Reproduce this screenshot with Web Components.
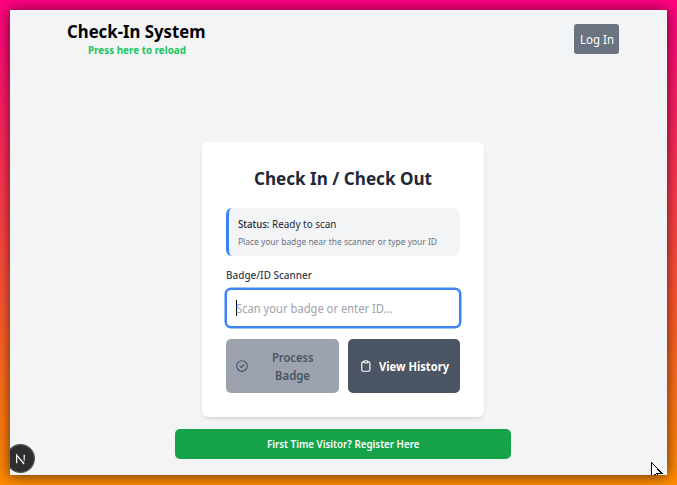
<!DOCTYPE html>
<html lang="en">
<head>
<meta charset="utf-8">
<title>Check-In System</title>
<style>
html,body{margin:0;height:100%;overflow:hidden}
body{font-family:"Noto Sans","Open Sans",sans-serif;color:#1f2937}
</style>
</head>
<body>
<checkin-app></checkin-app>
<script>
const define = (name, html, after) => {
  const t = document.createElement('template');
  t.innerHTML = html;
  customElements.define(name, class extends HTMLElement {
    connectedCallback() {
      if (this.shadowRoot) return;
      this.attachShadow({mode: 'open'}).append(t.content.cloneNode(true));
      if (after) after(this);
    }
  });
};

/* One line of text condensed to a given width: w = width, s = size, l = line height */
define('fit-text', `<style>
:host{display:block;white-space:nowrap;flex:none}
span{display:inline-block;transform-origin:0 0;vertical-align:top}
</style><span><slot></slot></span>`, el => {
  const w = +el.getAttribute('w');
  el.style.fontSize = el.getAttribute('s') + 'px';
  el.style.lineHeight = el.getAttribute('l') + 'px';
  el.style.height = el.getAttribute('l') + 'px';
  el.style.width = w + 'px';
  const span = el.shadowRoot.querySelector('span');
  span.style.transform = `scaleX(${w / span.getBoundingClientRect().width})`;
});

define('app-header', `<style>
:host{display:flex;justify-content:space-between;align-items:flex-start;padding:14px 48px 0 57px}
.brand{display:flex;flex-direction:column;align-items:center;margin-top:-1px}
.title{font-weight:700;color:#000}
.reload{font-weight:700;color:#22c55e;margin:1px 0 0 1px}
button{all:unset;box-sizing:border-box;width:45px;height:30px;border-radius:3px;background:#6b7280;color:#fff;display:flex;align-items:center;justify-content:center;padding-top:1px}
</style>
<div class="brand"><fit-text class="title" w="138.5" s="18" l="16">Check-In System</fit-text>
<fit-text class="reload" w="98" s="10.5" l="20">Press here to reload</fit-text></div>
<button><fit-text w="34" s="12" l="20">Log In</fit-text></button>`);

define('status-box', `<style>
:host{display:block;box-sizing:border-box;height:48px;border-left:3px solid #3b82f6;border-radius:6px;background:#f3f4f6;padding:8px 9px}
div{display:flex;gap:2.5px;color:#1f2937}
.hint{color:#6b7280}
</style>
<div><fit-text style="font-weight:500" w="31.5" s="10.5" l="16">Status:</fit-text><fit-text w="64.5" s="10.5" l="16">Ready to scan</fit-text></div>
<fit-text class="hint" w="199" s="9" l="19">Place your badge near the scanner or type your ID</fit-text>`);

define('scan-field', `<style>
:host{display:block;padding-top:11px}
.label{color:#374151;font-weight:500}
.box{box-sizing:border-box;height:38px;margin-top:6px;border-radius:5px;background:#fff;border:1px solid #3b82f6;box-shadow:0 0 0 1.5px #3b82f6;display:flex;align-items:center;padding-left:9px;color:#9ca3af}
.caret{width:1px;height:16px;background:#000;margin-right:-1px}
.hint{padding-top:2px}
</style>
<fit-text class="label" w="86" s="10.5" l="16">Badge/ID Scanner</fit-text>
<div class="box"><i class="caret"></i><fit-text class="hint" w="156.5" s="12" l="18">Scan your badge or enter ID...</fit-text></div>`);

define('action-button', `<style>
:host{display:flex;box-sizing:border-box;align-items:center;height:54px;border-radius:5px;background:#4b5563;color:#fff;font-weight:600;padding:0 10px}
:host([disabled]){background:#9ca3af;color:#4b5563}
.text{flex:1;display:flex;flex-direction:column;align-items:center;padding-top:2px}
::slotted(svg){flex:none;display:block}
</style><slot name="icon"></slot><div class="text"><slot></slot></div>`);

define('checkin-card', `<style>
:host{display:block;box-sizing:border-box;width:282px;height:275px;margin:0 0 0 192px;padding:24px;background:#fff;border-radius:6px;box-shadow:0 3px 5px -1px #0000001a,0 2px 3px -2px #0000001a}
.head{display:flex;justify-content:center;height:42px;font-weight:700}
.actions{display:grid;grid-template-columns:113px 112px;gap:9px;margin-top:12px}
</style>
<div class="head"><fit-text w="178" s="18" l="24">Check In / Check Out</fit-text></div>
<status-box></status-box>
<scan-field></scan-field>
<div class="actions">
<action-button disabled><svg slot="icon" width="12" height="12" viewBox="0 0 12 12" fill="none" stroke="#4b5563" stroke-width="1.15"><circle cx="6" cy="6" r="5.3"/><path d="M4 6.1l1.4 1.4L8.1 4.7" stroke-linecap="round" stroke-linejoin="round"/></svg>
<fit-text w="41.5" s="12" l="18" style="margin-left:8px">Process</fit-text><fit-text w="35" s="12" l="18" style="margin-left:8px">Badge</fit-text></action-button>
<action-button><svg slot="icon" style="margin-left:2px" width="12" height="12" viewBox="0 0 12 12" fill="none" stroke="#fff" stroke-width="1.15" stroke-linejoin="round"><path d="M4 1.8H3a1.2 1.2 0 0 0-1.2 1.2v7A1.2 1.2 0 0 0 3 11.2h5.7A1.2 1.2 0 0 0 9.9 10V3a1.2 1.2 0 0 0-1.2-1.2h-1"/><path d="M4 1.7a1 1 0 0 1 1-1h1.7a1 1 0 0 1 1 1v.3a1 1 0 0 1-1 1H5a1 1 0 0 1-1-1z"/></svg>
<fit-text w="70" s="12" l="18" style="margin-left:6px;font-weight:700">View History</fit-text></action-button>
</div>`);

define('visitor-button', `<style>
:host{display:flex;align-items:center;justify-content:center;width:336px;height:30px;margin:12px 0 0 165px;border-radius:5px;background:#16a34a;color:#fff;font-weight:600}
</style><fit-text w="152.5" s="10.5" l="16">First Time Visitor? Register Here</fit-text>`);

define('dev-badge', `<style>
:host{position:absolute;left:-4px;top:434px;width:29px;height:29px}
svg{display:block;overflow:visible}
</style>
<svg width="29" height="29" viewBox="0 0 29 29" fill="none"><defs><linearGradient id="g" x1="0" y1="10" x2="0" y2="19" gradientUnits="userSpaceOnUse"><stop offset=".4" stop-color="#fff"/><stop offset="1" stop-color="#fff" stop-opacity=".25"/></linearGradient></defs>
<circle cx="14.5" cy="14.5" r="13.9" fill="#2e2e2e" stroke="#55585b" stroke-width="1.2"/>
<path d="M10.7 19.2v-8l7.4 8.8" stroke="#fff" stroke-width="1.2"/><path d="M18.2 10.8v6.9" stroke="url(#g)" stroke-width="1.2"/></svg>`);

define('mouse-pointer', `<style>
:host{position:absolute;left:641px;top:452px;width:12px;height:19px}svg{display:block}
</style><svg width="12" height="19" viewBox="0 0 12 19" shape-rendering="crispEdges"><path d="M.5.5v15.500l3.500-3.500 2.500 5.500 2-1-2.500-5.500h5z" fill="#fff" stroke="#000"/></svg>`);

define('checkin-app', `<style>
:host{display:block;box-sizing:border-box;width:677px;height:485px;padding:10px;background:linear-gradient(#ff0080,#ff8c00)}
.shade{width:657px;height:465px;box-shadow:0 1px 13px #000000a6}
.window{position:relative;height:465px;overflow:hidden;background:#f3f4f6}
app-header{box-sizing:border-box;height:132px}
</style>
<div class="shade"><div class="window">
<app-header></app-header><checkin-card></checkin-card><visitor-button></visitor-button>
<dev-badge></dev-badge><mouse-pointer></mouse-pointer>
</div></div>`);
</script>
</body>
</html>
